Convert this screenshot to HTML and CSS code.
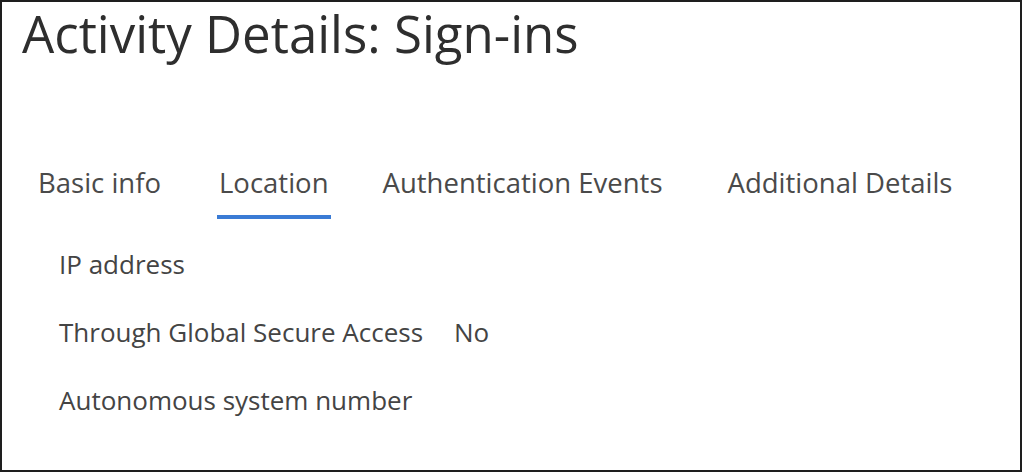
FILE: index.html
```html
<!DOCTYPE html>
<html lang="en">
<head>
<meta charset="utf-8">
<title>Activity Details: Sign-ins</title>
<link rel="stylesheet" href="styles.css">
</head>
<body>
<div class="frame">
  <h1 class="title">Activity Details: Sign-ins</h1>
  <nav class="tabs">
    <span class="tab">Basic info</span>
    <span class="tab active">Location</span>
    <span class="tab tab-auth">Authentication Events</span>
    <span class="tab tab-last">Additional Details</span>
  </nav>
  <div class="rows">
    <div class="row"><span class="label">IP address</span></div>
    <div class="row"><span class="label">Through Global Secure Access</span><span class="value">No</span></div>
    <div class="row"><span class="label">Autonomous system number</span></div>
  </div>
</div>
</body>
</html>
```
FILE: styles.css
```css
html, body {
  margin: 0;
  padding: 0;
  background: #ffffff;
}
body {
  font-family: "Open Sans", "Noto Sans", sans-serif;
}
.frame {
  width: 1022px;
  height: 472px;
  box-sizing: border-box;
  border: 2px solid #1e1e1e;
  background: #ffffff;
  padding: 0 0 0 20px;
}
.title {
  margin: 0;
  font-size: 51px;
  font-weight: 400;
  line-height: 62px;
  color: #2e2e2e;
}
.tabs {
  display: flex;
  margin-top: 101px;
  padding-left: 14px;
  gap: 54px;
}
.tab {
  font-size: 27.5px;
  line-height: 36px;
  color: #4a4a4a;
  padding: 0 2px 14px;
  border-bottom: 4px solid transparent;
}
.tab.active {
  border-bottom-color: #3a7bd5;
}
.tab.tab-auth {
  margin-left: -4px;
}
.tab.tab-last {
  margin-left: 7px;
}
.rows {
  display: flex;
  flex-direction: column;
  padding-left: 37px;
  margin-top: 28px;
  gap: 34px;
}
.row {
  display: flex;
  gap: 31px;
  font-size: 26px;
  line-height: 34px;
  color: #444444;
}
```
